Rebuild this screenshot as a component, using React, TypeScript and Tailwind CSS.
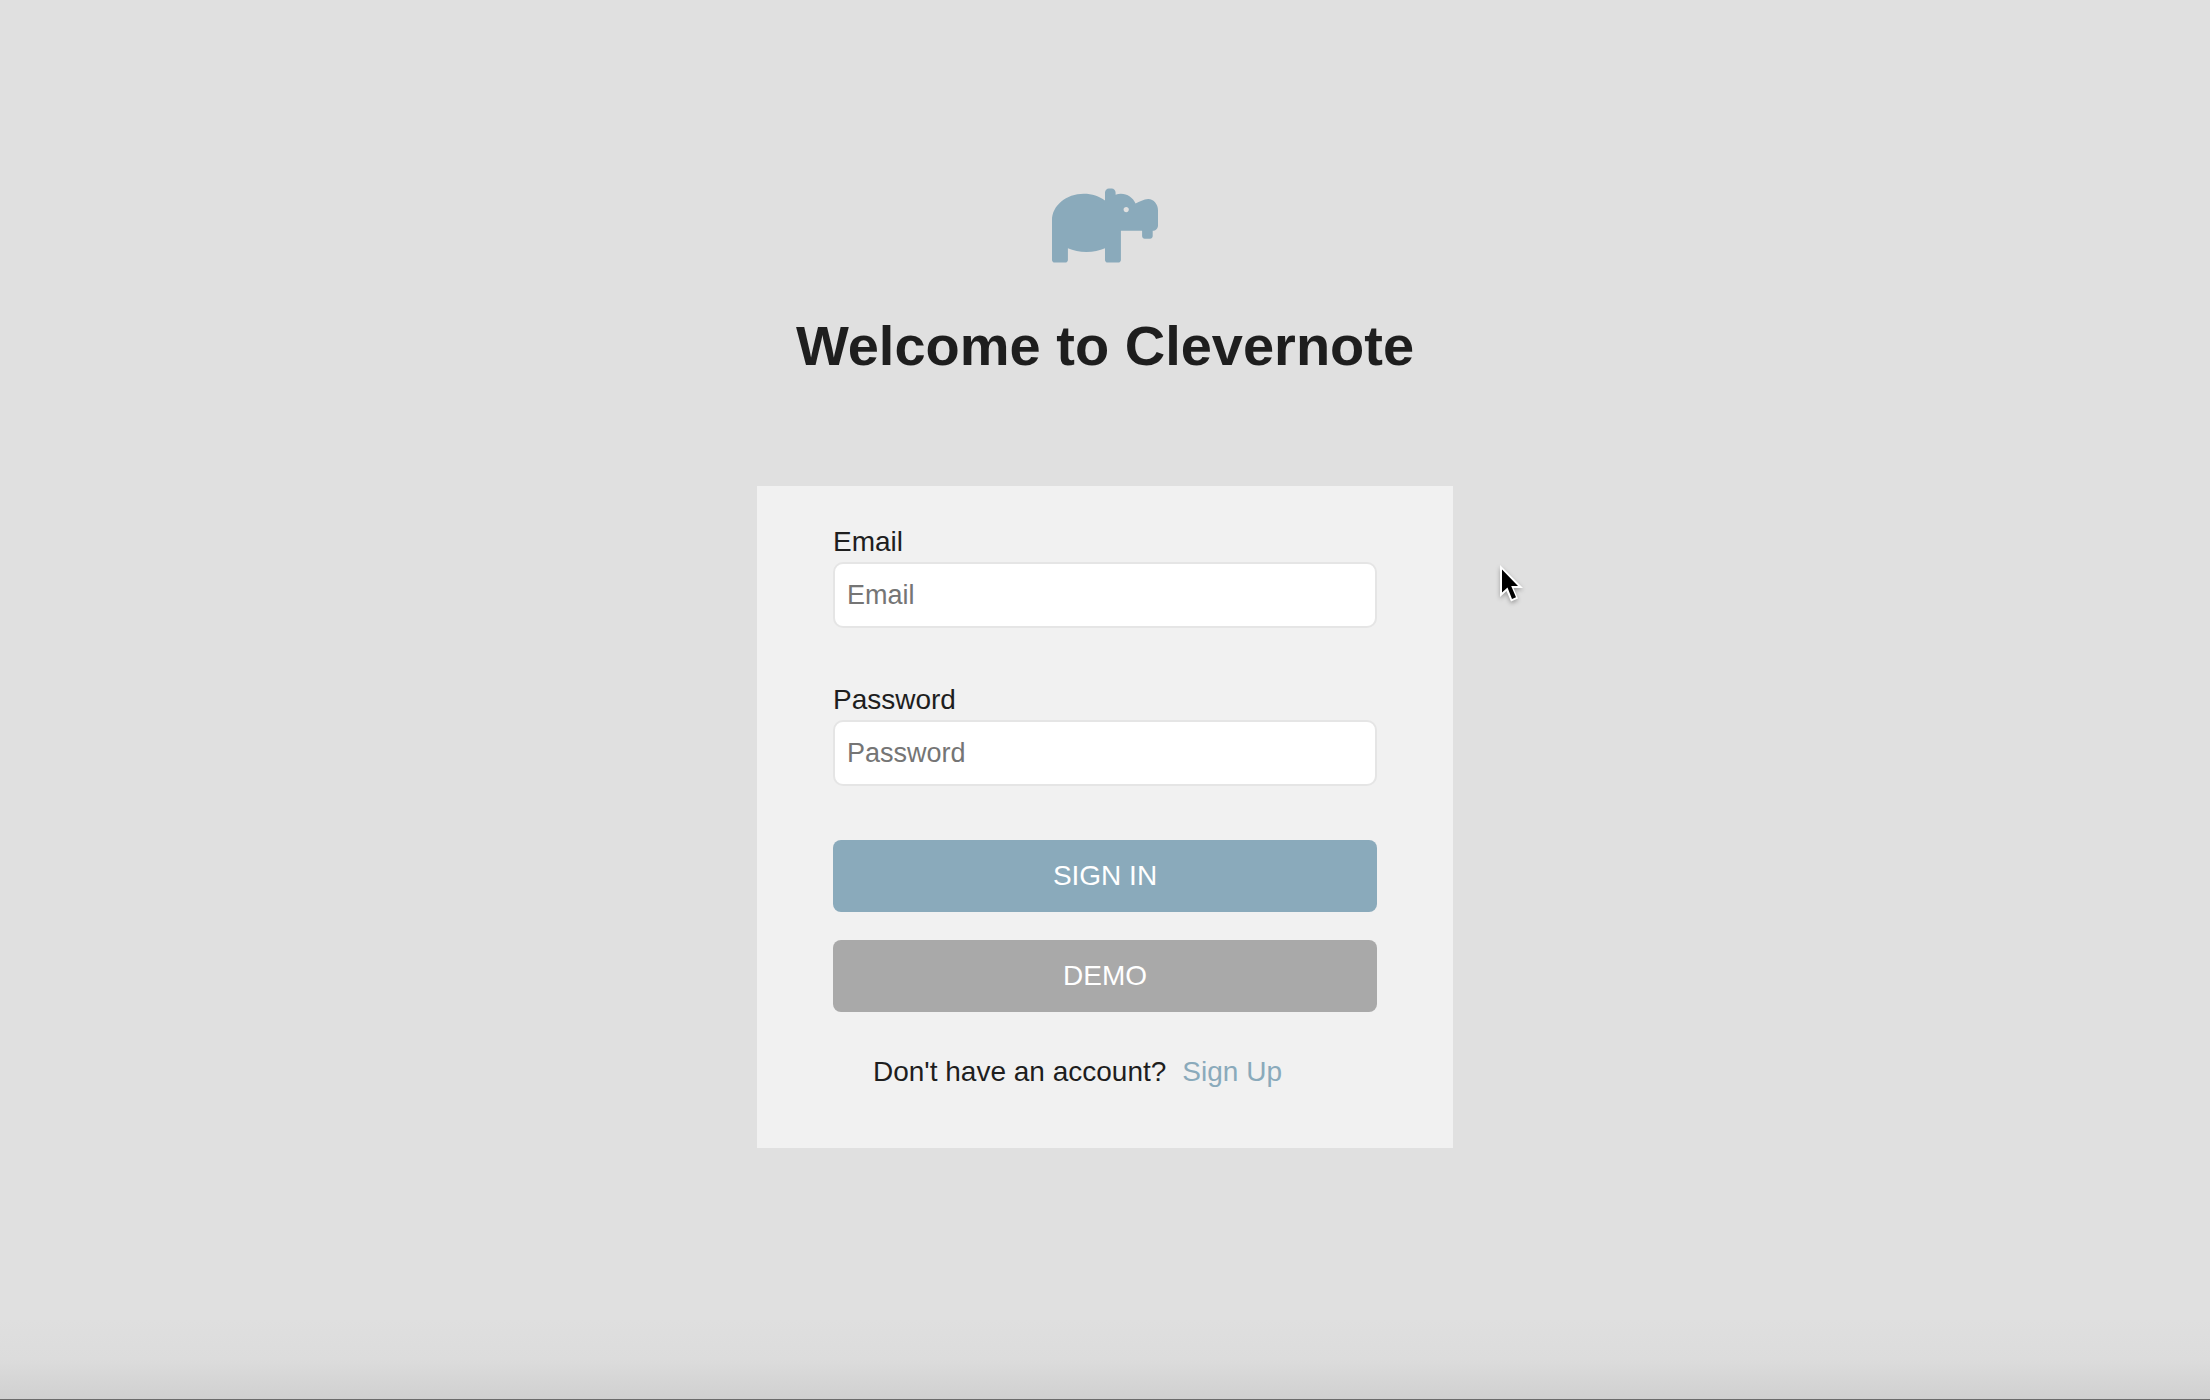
import { FaHippo } from "react-icons/fa";

type FieldProps = { id: string; label: string; type: string };

function Field({ id, label, type }: FieldProps) {
  return (
    <div className="mb-14 flex flex-col gap-1">
      <label htmlFor={id} className="text-[28px] leading-8">
        {label}
      </label>
      <input
        id={id}
        type={type}
        placeholder={label}
        className="h-[66px] w-full rounded-[10px] border-2 border-[#e5e5e5] bg-white px-3 text-[27px] outline-none placeholder:text-[#757575]"
      />
    </div>
  );
}

function Pointer() {
  return (
    <svg
      className="pointer-events-none absolute top-[564px] left-[1499px] h-10 w-7 drop-shadow-[0_2px_2px_rgba(0,0,0,0.3)]"
      viewBox="0 0 28 40"
      aria-hidden="true"
    >
      <path
        d="M1 1v32l6.500-6 4.500 10.500 7-3-4.500-10.500H24z"
        fill="#fff"
      />
      <path d="M3 5.500v23l5.500-5 4.500 11.500 4-1.700-4.800-11.300H19z" fill="#000" />
    </svg>
  );
}

export default function App() {
  return (
    <div className="relative flex min-h-screen flex-col bg-[#e0e0e0] font-['Liberation_Sans',Arial,sans-serif] text-[#1e1e1e]">
      <main className="flex flex-1 flex-col items-center pt-[183px]">
        <FaHippo className="h-[85px] w-[106px] text-[#8aaabb]" aria-hidden="true" />
        <h1 className="mt-[46px] text-[56px] leading-16 font-bold">Welcome to Clevernote</h1>
        <form
          className="mt-[108px] flex w-full max-w-[696px] flex-col bg-[#f1f1f1] px-[76px] pt-10 pb-[60px]"
          onSubmit={(event) => event.preventDefault()}
        >
          <Field id="email" label="Email" type="email" />
          <Field id="password" label="Password" type="password" />
          <div className="-mt-0.5 flex flex-col gap-7">
            <button type="submit" className="h-[72px] rounded-lg bg-[#8aaabb] text-[28px] text-white">
              SIGN IN
            </button>
            <button type="button" className="h-[72px] rounded-lg bg-[#a9a9a9] text-[28px] text-white">
              DEMO
            </button>
          </div>
          <div className="mt-11 flex gap-4 pl-10 text-[28px] leading-8">
            <p>Don't have an account?</p>
            <a href="#signup" className="text-[#8aaabb]">
              Sign Up
            </a>
          </div>
        </form>
      </main>
      <footer className="h-20 border-b border-[#6b6b6b] bg-linear-to-b from-[#dfdfdf] via-[#dcdcdc] to-[#d0d0d0]" />
      <Pointer />
    </div>
  );
}
